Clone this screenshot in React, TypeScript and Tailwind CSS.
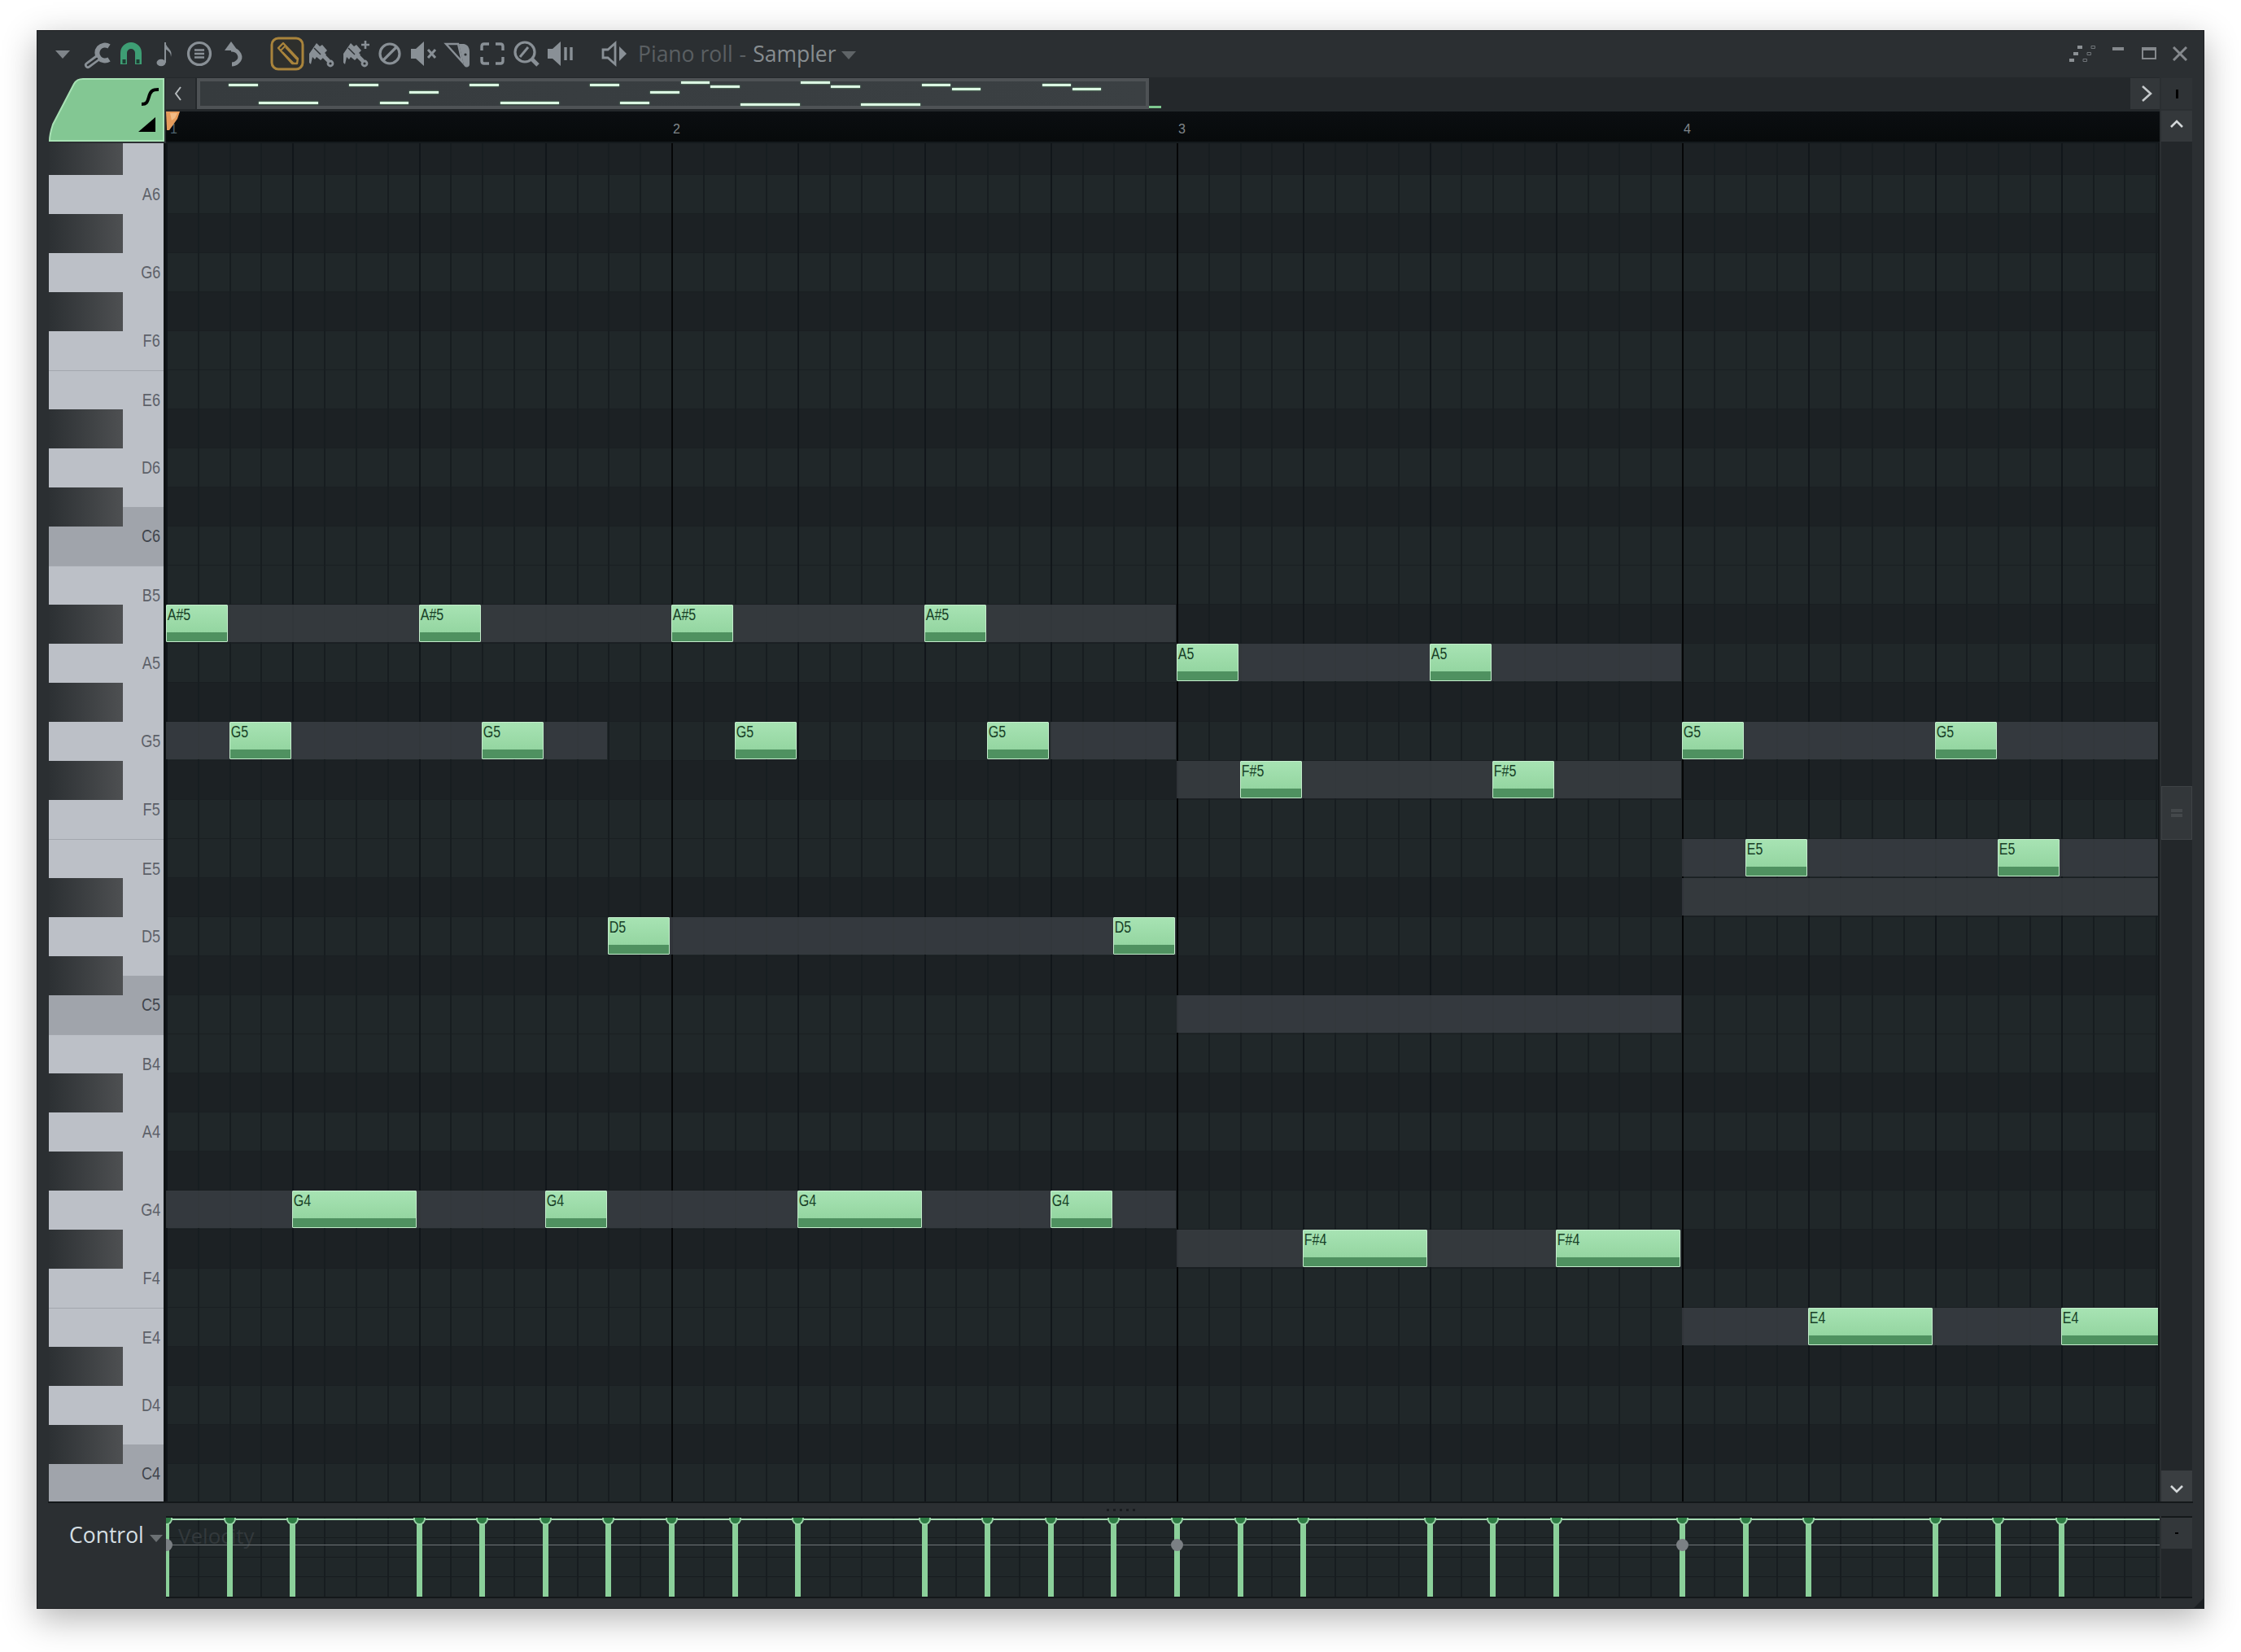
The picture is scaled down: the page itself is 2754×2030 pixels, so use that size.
import React from "react";

const STEP = 38.8125;
const X0 = 1; // first grid line relative to the centre column
const sx = (s: number) => Math.round(X0 + s * STEP);
const ROW = 48;
const ROW_OFFSET = -9;

const SEMI = ["B", "A#", "A", "G#", "G", "F#", "F", "E", "D#", "D", "C#", "C"];
const ROWS: string[] = [];
for (const oct of [6, 5, 4]) {
  for (const n of SEMI) {
    if (oct === 6 && n === "B") continue;
    ROWS.push(n + oct);
  }
}
const rowTop = (name: string) => ROW_OFFSET + ROWS.indexOf(name) * ROW;

const END = 64;
const BANDS: [string, number, number][] = [
  ["A#5", 0, 32],
  ["A5", 32, 48],
  ["G5", 0, 14],
  ["G5", 28, 32],
  ["G5", 48, END],
  ["F#5", 32, 48],
  ["E5", 48, END],
  ["D#5", 48, END],
  ["D5", 14, 32],
  ["C5", 32, 48],
  ["G4", 0, 32],
  ["F#4", 32, 48],
  ["E4", 48, END],
];

const NOTES: [string, number, number][] = [
  ["A#5", 0, 2], ["A#5", 8, 2], ["A#5", 16, 2], ["A#5", 24, 2],
  ["G5", 2, 2], ["G5", 10, 2], ["G5", 18, 2], ["G5", 26, 2],
  ["G4", 4, 4], ["G4", 12, 2], ["G4", 20, 4], ["G4", 28, 2],
  ["D5", 14, 2], ["D5", 30, 2],
  ["A5", 32, 2], ["A5", 40, 2],
  ["F#5", 34, 2], ["F#5", 42, 2],
  ["F#4", 36, 4], ["F#4", 44, 4],
  ["G5", 48, 2], ["G5", 56, 2],
  ["E5", 50, 2], ["E5", 58, 2],
  ["E4", 52, 4], ["E4", 60, 4],
];

const VEL_STEPS = [0, 2, 4, 8, 10, 12, 14, 16, 18, 20, 24, 26, 28, 30, 32, 34, 36, 40, 42, 44, 48, 50, 52, 56, 58, 60];

const OVERVIEW: [number, number, number][] = [
  [281, 317, 104], [318, 391, 126], [429, 465, 104], [467, 502, 126], [503, 539, 113],
  [577, 613, 104], [615, 687, 126], [725, 761, 104], [762, 798, 126], [799, 835, 113],
  [837, 872, 101], [873, 909, 106], [910, 983, 128], [984, 1020, 101], [1021, 1057, 106],
  [1058, 1131, 128], [1133, 1168, 104], [1170, 1205, 109], [1281, 1316, 104], [1318, 1353, 109],
];

const C = "#899096";

function Icon({ children, size = 40 }: { children: React.ReactNode; size?: number }) {
  return (
    <div className="w-[42px] h-[42px] flex items-center justify-center shrink-0">
      <svg width={size} height={size} viewBox="0 0 40 40" fill="none">{children}</svg>
    </div>
  );
}

function Brush({ plus }: { plus?: boolean }) {
  return (
    <Icon>
      <path d="M14 7 L18 11 L21 9 L27 16 L24 19 L26 21 L19 28 L14 24 L12 27 L9 24 L7 33 L5 31 L5 20 Z" fill={C} />
      <path d="M23 23 L29 29" stroke={C} strokeWidth="5" />
      <circle cx="31" cy="32" r="4.4" fill={C} />
      <circle cx="31" cy="32" r="1.6" fill="#2b2f32" />
      <path d="M11 13 L19 21" stroke="#2b2f32" strokeWidth="1.4" />
      {plus && <path d="M32 4 V14 M27 9 H37" stroke={C} strokeWidth="2.6" />}
    </Icon>
  );
}

function GridLines() {
  const lines = [];
  for (let s = 0; s < 64; s++) {
    const bar = s % 16 === 0;
    const beat = s % 4 === 0;
    lines.push(
      <div
        key={s}
        className={
          "absolute top-0 bottom-0 " +
          (bar && s > 0
            ? "w-[2px] bg-[#050607]"
            : beat
            ? "w-[2px] bg-[#11161a]"
            : "w-[2px] bg-[#171d20]")
        }
        style={{ left: sx(s) - 1 }}
      />
    );
  }
  return <>{lines}</>;
}

function Note({ name, step, len }: { name: string; step: number; len: number }) {
  return (
    <div
      className="absolute flex flex-col h-[46px] rounded-[1px] border border-[#c3eccb] bg-gradient-to-b from-[#a7e3b3] to-[#8ed19b] overflow-hidden"
      style={{ left: sx(step) - 1, top: rowTop(name), width: Math.round(len * STEP) - 2 }}
    >
      <span className="inline-block origin-left scale-x-[0.8] pl-px pt-px text-[20px] leading-[20px] text-[#183f27] [font-family:'Liberation_Sans',sans-serif] whitespace-nowrap">
        {name}
      </span>
      <div className="mt-auto h-[11px] bg-[#4f9160] shrink-0" />
    </div>
  );
}

function Key({ name }: { name: string }) {
  const n = name.slice(0, -1);
  const black = n.includes("#");
  const isC = n === "C";
  const offset: Record<string, string> = {
    C: "-translate-y-[12px]",
    F: "-translate-y-[12px]",
    E: "translate-y-[12px]",
    B: "translate-y-[12px]",
  };
  return (
    <div
      className={
        "h-[48px] shrink-0 flex items-center " +
        (isC ? "bg-[#a0a4ab] " : "bg-[#bcc0c7] ") +
        (n === "E" || n === "B" ? "border-t border-[#a3a7ae] " : "") +
        (black ? "" : "justify-end pr-[4px]")
      }
    >
      {black ? (
        <>
          <div className="w-[91px] h-full shrink-0 bg-gradient-to-r from-[#2c3033] to-[#4e5052]" />
          {n === "C#" && <div className="flex-1 h-[24px] self-end bg-[#a0a4ab]" />}
        </>
      ) : (
        <span
          className={
            "inline-block origin-right scale-x-[0.82] text-[22px] leading-none [font-family:'Liberation_Sans',sans-serif] " +
            (offset[n] ?? "") +
            (isC ? " text-[#3f444c]" : " text-[#5d6169]")
          }
        >
          {name}
        </span>
      )}
    </div>
  );
}

function GridRow({ name }: { name: string }) {
  const black = name.includes("#");
  return (
    <div className={"h-[48px] shrink-0 border-b border-[#1a1f22] " + (black ? "bg-[#1c2124]" : "bg-[#202729]")} />
  );
}

export default function App() {
  return (
    <div className="w-[2754px] h-[2030px] bg-white pt-[37px] pl-[45px] overflow-hidden [font-family:'Open_Sans',sans-serif]">
      <div className="w-[2664px] h-[1940px] flex flex-col bg-[#2b2f32] shadow-[inset_0_0_0_1px_#1c1e21,0_12px_40px_rgba(0,0,0,0.3)] relative">
        {/* Toolbar */}
        <div className="h-[58px] shrink-0 flex items-center pl-[11px] pr-[21px]">
          <Icon>
            <path d="M11 16 H29 L20 26 Z" fill="#7f858a" />
          </Icon>
          <Icon>
            <path d="M35 11 A9.5 9.5 0 1 0 35 27" stroke={C} strokeWidth="6" />
            <path d="M21 25 L9 34" stroke={C} strokeWidth="8" strokeLinecap="round" />
            <path d="M20 26 L9 34" stroke="#2b2f32" strokeWidth="2.6" strokeLinecap="round" />
          </Icon>
          <Icon>
            <path d="M7 33 V19 a13 13 0 0 1 26 0 V33 h-8 V19 a5 5 0 0 0 -10 0 V33 Z" fill="#3e9e74" />
            <path d="M9.5 27 h4 v5 h-4 Z M26.5 27 h4 v5 h-4 Z" fill="#1f3d33" />
          </Icon>
          <Icon>
            <ellipse cx="15" cy="31" rx="5.5" ry="4.3" fill={C} />
            <path d="M20 31 V6" stroke={C} strokeWidth="2" />
            <path d="M20 6 C22 14 30 15 27 24 C27 18 24 17 20 14 Z" fill={C} />
          </Icon>
          <Icon>
            <circle cx="20" cy="20" r="13.5" stroke={C} strokeWidth="3.2" />
            <path d="M14 15.5 H26 M14 20 H26 M14 24.5 H26" stroke={C} strokeWidth="2.4" />
          </Icon>
          <Icon>
            <path d="M17 5 L9 16 L25 16 Z" fill={C} />
            <path d="M17 15 C27 15 31 25 25 30 C23 32 20 33 18 33" stroke={C} strokeWidth="5" />
          </Icon>
          <div className="ml-[24px] w-[42px] h-[42px] flex items-center justify-center shrink-0">
            <svg width="42" height="42" viewBox="0 0 42 42" fill="none">
              <rect x="2" y="2" width="38" height="38" rx="8" stroke="#a9843c" strokeWidth="3" fill="#2e2f2c" />
              <path d="M10 14 L16 8 L34 27 L33 33 L27 33 Z" stroke="#a9843c" strokeWidth="2.4" fill="#2e2f2c" strokeLinejoin="round" />
              <path d="M13 17 L19 11 M15 19 L29 33 M19 13 L33 28" stroke="#a9843c" strokeWidth="2" />
            </svg>
          </div>
          <Brush />
          <Brush plus />
          <Icon>
            <circle cx="20" cy="20" r="12" stroke={C} strokeWidth="3.2" />
            <path d="M12 28 L28 12" stroke={C} strokeWidth="3.2" />
          </Icon>
          <Icon>
            <path d="M4 14 H10 L20 5 V35 L10 26 H4 Z" fill={C} />
            <path d="M25 15 L34 25 M34 15 L25 25" stroke={C} strokeWidth="3" />
          </Icon>
          <Icon>
            <path d="M5 8 H20 L25 30 Z" stroke={C} strokeWidth="2.4" fill="none" />
            <path d="M21 8 H27 C32 9 34 13 34 18 V33 C34 37 29 38 27 34 L21 8 Z" fill={C} />
            <circle cx="29" cy="21" r="1.6" fill="#2b2f32" />
          </Icon>
          <Icon>
            <path d="M16 8 H10 Q7 8 7 11 V16 M24 8 H30 Q33 8 33 11 V16 M7 24 V29 Q7 32 10 32 H16 M33 24 V29 Q33 32 30 32 H24" stroke={C} strokeWidth="3.4" />
          </Icon>
          <Icon>
            <circle cx="18" cy="18" r="12" stroke={C} strokeWidth="3.2" />
            <path d="M12 24 L22 12" stroke={C} strokeWidth="3" />
            <path d="M27 27 L34 34" stroke={C} strokeWidth="5" />
          </Icon>
          <Icon>
            <path d="M4 14 H10 L20 5 V35 L10 26 H4 Z" fill={C} />
            <path d="M26 12 V28 M33 12 V28" stroke={C} strokeWidth="3.4" />
          </Icon>
          <div className="ml-[25px]">
            <Icon>
              <path d="M5 15 H11 L20 7 V33 L11 25 H5 Z" stroke={C} strokeWidth="2.8" />
              <path d="M25 11 L34 20 L25 29 Z" fill={C} />
            </Icon>
          </div>
          <div className="ml-[7px] flex items-center text-[26.5px] leading-none whitespace-nowrap">
            <span className="text-[#5a5f62]">Piano roll</span>
            <span className="text-[#5a5f62] mx-[8px]">-</span>
            <span className="text-[#888e91]">Sampler</span>
            <svg width="18" height="10" viewBox="0 0 18 10" className="ml-[6px] mt-[4px]">
              <path d="M0 0 H18 L9 10 Z" fill="#5f6467" />
            </svg>
          </div>
          <div className="ml-auto flex items-center">
            <svg width="32" height="22" viewBox="0 0 32 22" fill="none" className="mr-[21px]">
              <path d="M10 1 h6 v4 h-6 Z M5 9 h6 v4 h-6 Z M0 17 h6 v4 h-6 Z" fill="#8b9094" />
              <path d="M27 1.5 h4.5 v3 h-4.5 Z M22 9.5 h4.5 v3 h-4.5 Z M17 17.5 h4.5 v3 h-4.5 Z" stroke="#6f7478" />
            </svg>
            <svg width="14" height="22" viewBox="0 0 14 22" className="mr-[22px]">
              <rect x="0" y="3" width="14" height="4" fill="#85898d" />
            </svg>
            <svg width="18" height="16" viewBox="0 0 18 16" className="mr-[20px]" fill="none">
              <rect x="1" y="1" width="16" height="13" stroke="#85898d" strokeWidth="2" />
              <rect x="1" y="1" width="16" height="3" fill="#85898d" />
            </svg>
            <svg width="18" height="18" viewBox="0 0 18 18">
              <path d="M1 1 L17 17 M17 1 L1 17" stroke="#85898d" strokeWidth="3" />
            </svg>
          </div>
        </div>

        {/* Main section */}
        <div className="h-[1750px] shrink-0 flex pl-[14px] pr-[15px]">
          {/* Left column */}
          <div className="w-[145px] shrink-0 flex flex-col">
            <div className="h-[81px] shrink-0 relative">
              <svg width="145" height="81" viewBox="0 0 145 81" className="block">
                <path
                  d="M43 2 H142 V78 H2 C2 70 4 64 6 58 L32 8 C35 3 38 2 43 2 Z"
                  fill="#83c793"
                  stroke="#a8e2b5"
                  strokeWidth="2"
                />
                <path d="M115 33 C121 33 122 31 124 24 C126 17 128 15 136 15" stroke="#000" strokeWidth="4" fill="none" />
                <path d="M111 67 L132 49 V67 Z" fill="#000" />
              </svg>
            </div>
            <div className="flex-1 min-h-0 ml-px border-r-[3px] border-[#0e1214] overflow-hidden bg-[#bcc0c7]">
              <div className="-mt-[9px] flex flex-col">
                {ROWS.map((r) => (
                  <Key key={r} name={r} />
                ))}
              </div>
            </div>
          </div>

          {/* Centre column */}
          <div className="w-[2450px] shrink-0 flex flex-col">
            <div className="h-[42px] shrink-0 flex py-px bg-[#24282b] gap-[2px]">
              <div className="w-[36px] h-[38px] bg-[#303437] flex items-center justify-center pr-[6px] shrink-0">
                <svg width="12" height="20" viewBox="0 0 12 20" fill="none">
                  <path d="M9 2 L3 10 L9 18" stroke="#b5babd" strokeWidth="2" />
                </svg>
              </div>
              <div className="w-[1170px] h-[38px] shrink-0 relative border-[4px] border-[#4e5255] bg-gradient-to-r from-[#363b3e] to-[#3b4043]">
                {OVERVIEW.map(([a, b, y]) => (
                  <div
                    key={a}
                    className="absolute h-[3px] bg-[#dcf7e3] shadow-[0_0_2px_#7ec88f]"
                    style={{ left: a - 246, width: b - a, top: y - 101 }}
                  />
                ))}
              </div>
              <div className="w-[15px] h-[3px] bg-[#7ec88f] mt-[34px] -ml-[2px] shrink-0" />
              <div className="ml-auto w-[36px] h-[38px] bg-[#33373a] flex items-center justify-center pl-[4px] shrink-0">
                <svg width="16" height="22" viewBox="0 0 16 22" fill="none">
                  <path d="M3 2 L13 11 L3 20" stroke="#c4c8ca" strokeWidth="2.6" />
                </svg>
              </div>
            </div>
            <div className="h-[39px] shrink-0 flex relative border-b-2 border-[#14191c] bg-gradient-to-b from-[#0b0e11] to-[#070a0b] text-[16px] leading-none text-[#80868a] [font-family:'Liberation_Sans',sans-serif]">
              <div className="w-[621px] shrink-0 pl-[5px] pt-[14px] text-[#4f6470]">1</div>
              <div className="w-[621px] shrink-0 pl-[2px] pt-[14px]">2</div>
              <div className="w-[621px] shrink-0 pl-[2px] pt-[14px]">3</div>
              <div className="w-[587px] shrink-0 pl-[2px] pt-[14px]">4</div>
              <svg width="17" height="24" viewBox="0 0 17 24" className="absolute left-0 top-0">
                <path d="M0 0 H17 L14 9 L4 23 L1 23 Z" fill="#e59c5c" />
                <path d="M5 2 H14 L11 8 L7 11 Z" fill="#f1bb86" />
              </svg>
            </div>
            <div className="flex-1 min-h-0 relative overflow-hidden border-r-2 border-[#14181a]">
              <div className="-mt-[9px] flex flex-col">
                {ROWS.map((r) => (
                  <GridRow key={r} name={r} />
                ))}
              </div>
              <div className="absolute inset-0">
                <GridLines />
              </div>
              {BANDS.map(([name, a, b]) => (
                <div
                  key={name + a}
                  className="absolute h-[46px] bg-[#383d42]/85"
                  style={{ left: sx(a) - 1, top: rowTop(name), width: sx(b) - sx(a) - (b === END ? 0 : 1) }}
                />
              ))}
              {NOTES.map(([name, step, len]) => (
                <Note key={name + step} name={name} step={step} len={len} />
              ))}
            </div>
          </div>

          {/* Right column */}
          <div className="w-[40px] shrink-0 pl-[2px] flex flex-col">
            <div className="h-[41px] shrink-0 pt-px">
              <div className="h-[38px] bg-[#2f3336] flex items-center justify-center">
                <div className="w-[3px] h-[11px] bg-black" />
              </div>
            </div>
            <div className="h-[38px] shrink-0 bg-[#34383b] flex items-center justify-center pb-[6px]">
              <svg width="18" height="12" viewBox="0 0 18 12" fill="none">
                <path d="M2 10 L9 3 L16 10" stroke="#d4d8da" strokeWidth="2.6" />
              </svg>
            </div>
            <div className="flex-1 min-h-0 bg-[#23272a] pt-[792px]">
              <div className="h-[66px] bg-[#33373a] border border-[#3f4346] flex flex-col items-center justify-center gap-[2px]">
                <div className="w-[14px] h-[4px] bg-[#44484b]" />
                <div className="w-[14px] h-[4px] bg-[#44484b]" />
              </div>
            </div>
            <div className="h-[38px] shrink-0 bg-[#3a3e41] flex items-center justify-center pt-[8px]">
              <svg width="18" height="12" viewBox="0 0 18 12" fill="none">
                <path d="M2 2 L9 9 L16 2" stroke="#d4d8da" strokeWidth="2.6" />
              </svg>
            </div>
          </div>
        </div>

        {/* Gap */}
        <div className="h-[18px] shrink-0 pl-[1315px]">
          <div className="ml-[-1301px] w-[2636px] h-[2px] bg-[#14181a]" />
          <div className="flex gap-[5px] mt-[7px]">
            {[0, 1, 2, 3, 4].map((d) => (
              <div key={d} className="w-[3px] h-[3px] bg-[#191c1f]" />
            ))}
          </div>
        </div>

        {/* Control lane */}
        <div className="h-[101px] shrink-0 flex pl-[14px] pr-[15px]">
          <div className="w-[145px] shrink-0 flex items-start pl-[26px] pt-[5px] text-[26.5px] leading-[36px] text-[#d5dfe3]">
            <span>Control</span>
            <svg width="16" height="9" viewBox="0 0 16 9" className="ml-[7px] mt-[18px] shrink-0">
              <path d="M0 0 H16 L8 9 Z" fill="#6b7073" />
            </svg>
          </div>
          <div className="w-[2450px] shrink-0 relative overflow-hidden bg-[#202729] border-y-2 border-[#14181a]">
            <div className="absolute inset-0">
              <GridLines />
            </div>
            <div className="absolute left-0 right-0 top-[24px] h-px bg-[#171c1f]" />
            <div className="absolute left-0 right-0 top-[48px] h-px bg-[#171c1f]" />
            <div className="absolute left-0 right-0 top-[72px] h-px bg-[#171c1f]" />
            <div className="absolute left-[15px] top-[4px] text-[26px] leading-[36px] text-[#33393c]">Velocity</div>
            <div className="absolute left-0 right-0 top-[33px] h-px bg-[#6f7578]" />
            <div className="absolute left-0 right-0 top-px h-[2px] bg-[#a6dcb3]" />
            {VEL_STEPS.map((s) => (
              <div key={s}>
                <div
                  className="absolute top-px bottom-0 w-[7px] bg-[#8bd09a]"
                  style={{ left: sx(s) - 4 }}
                />
                <div
                  className="absolute top-0 w-[15px] h-[9px] rounded-b-full bg-[#2f7d45] border-2 border-t-0 border-[#98d4a6]"
                  style={{ left: sx(s) - 8 }}
                />
              </div>
            ))}
            {[0, 32, 48].map((s) => (
              <div
                key={s}
                className="absolute top-[26px] w-[15px] h-[15px] rounded-full bg-[#7b8084]"
                style={{ left: sx(s) - 8 }}
              />
            ))}
          </div>
          <div className="w-[40px] shrink-0 pl-[2px]">
            <div className="h-full bg-[#23272a] border-y-2 border-[#14181a]">
              <div className="h-[38px] bg-[#33373a] flex items-center justify-center">
                <div className="w-[4px] h-[2px] bg-black" />
              </div>
            </div>
          </div>
        </div>

        {/* Resize corner */}
        <svg width="14" height="14" viewBox="0 0 14 14" className="absolute right-0 bottom-0">
          <path d="M14 0 V14 H0 Z" fill="#1c2023" />
        </svg>
      </div>
    </div>
  );
}
